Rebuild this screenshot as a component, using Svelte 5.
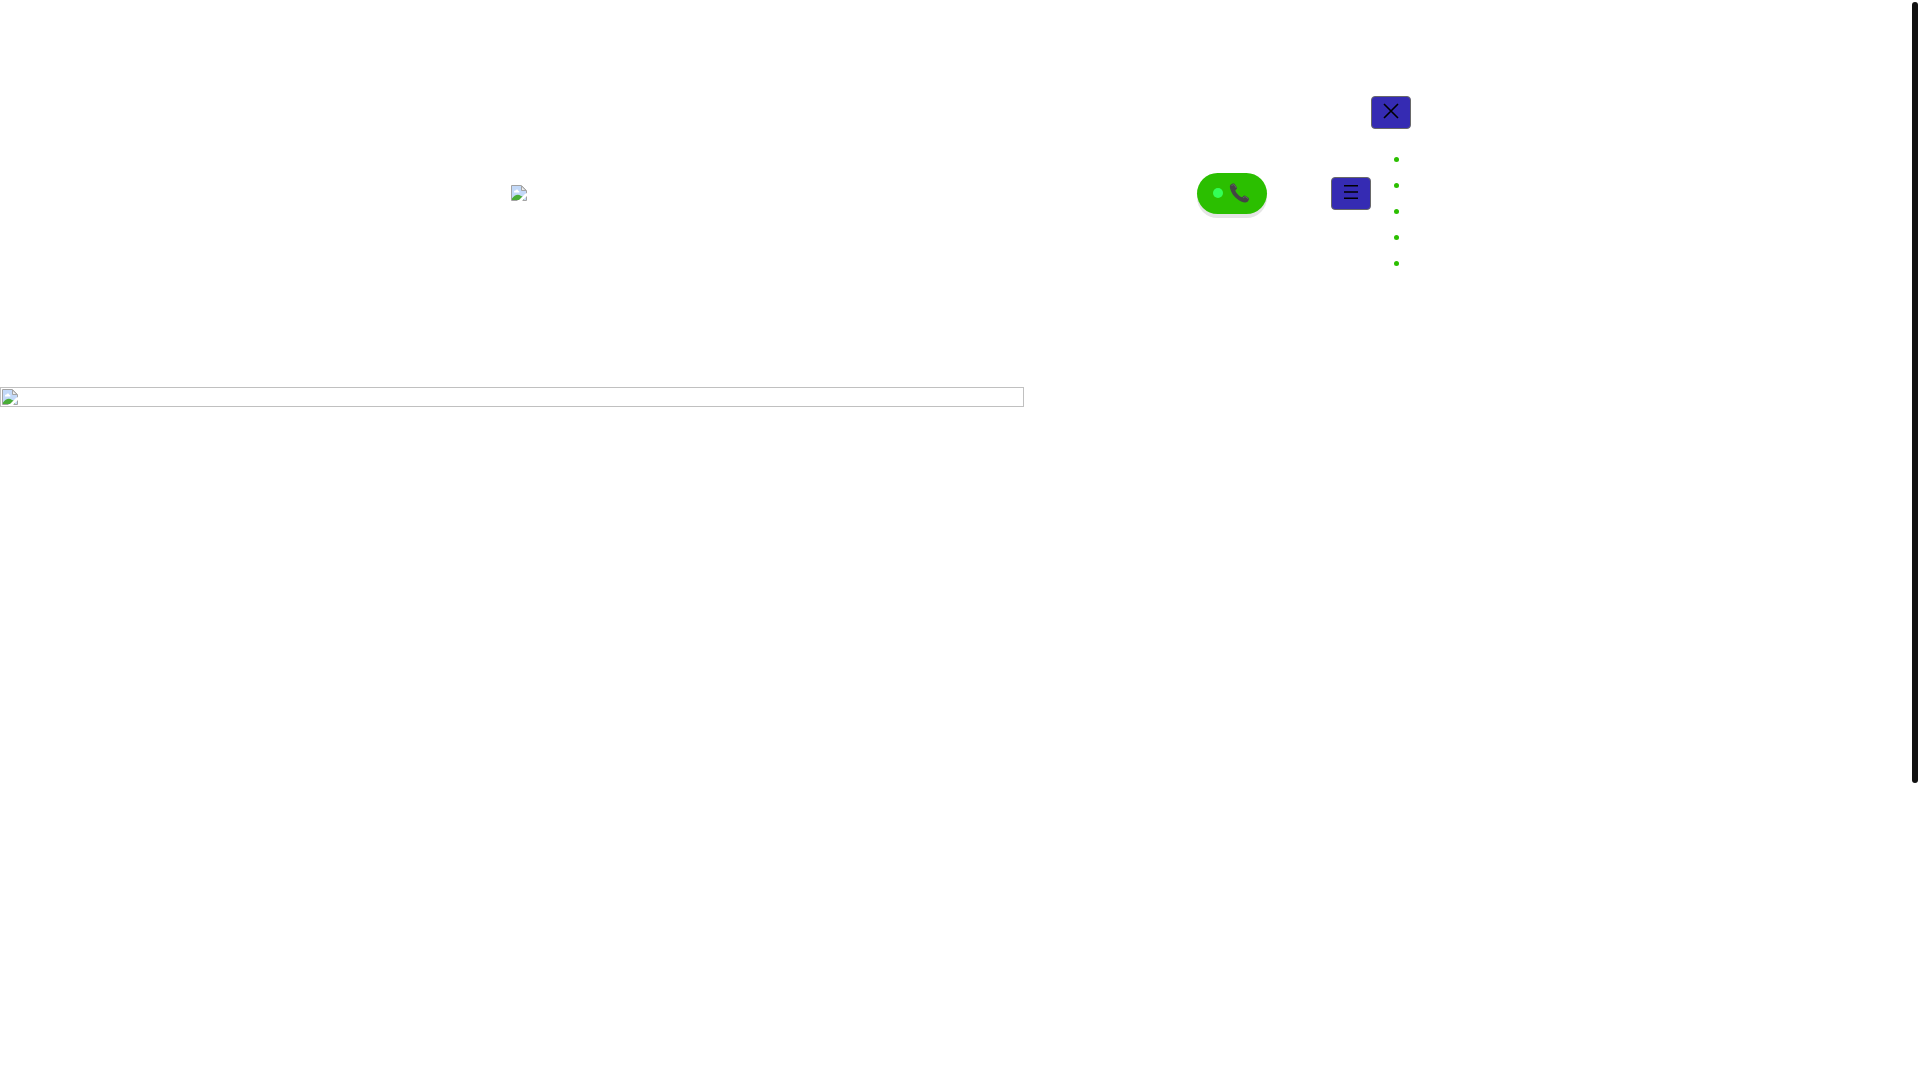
<script lang="ts">
	let menuOpen = $state(true);

	const links = ['home', 'services', 'about', 'reviews', 'contact'];
</script>

{#snippet brokenImage()}
	<svg class="broken" viewBox="0 0 16 16" aria-hidden="true">
		<path d="M1 1h10v4h4v10h-14z" fill="#c3d9f8" />
		<path d="M3 7c0-1.200.8-1.700 1.600-1.500c.5-1.500 2.400-1.200 2.600.3c1 0 1.400.8 1.200 1.700h-5.400z" fill="#fff" />
		<path d="M1 15v-1.500c2.500-3 5.500-5 9-2.500l3 1v3z" fill="#4aad37" />
		<path d="M6.500 15.500h-6v-15h10l5 5v10h-5" fill="none" stroke="#a3a3a3" />
		<path d="M10.500 1v4.500h4.500z" fill="#eee" stroke="#a3a3a3" />
		<path d="M7 16l7-7l2-1v3l-5 5z" fill="#fff" />
	</svg>
{/snippet}

<header class="site-header">
	<div class="bar">
		<a class="logo" href="#home" aria-label="Home">{@render brokenImage()}</a>
		<a class="call" href="#call" aria-label="Call">
			<span class="live"></span>
			<svg class="phone" viewBox="0 0 20 20" aria-hidden="true">
				<path d="M.8 2C2 .5 4 0 5 .8L7.600 4.800C7.800 6 6 6.500 5.800 7.800C7 10.500 9.500 13.200 12.300 14.300C13.500 14.200 14 12.400 15.300 12.600L19.200 15C20 16.200 19 18 17.800 19C15 20 12 19 9 17C4.500 14 1.500 9.500 .6 5.500C.3 4 .3 3 .8 2Z" fill="#444" />
				<path d="M2 2.500L4.500 1.500L6.800 5M13.500 15L15.500 13.500L18.800 15.800" fill="none" stroke="#626262" />
			</svg>
		</a>
		<button class="toggle" aria-label="Open menu" onclick={() => (menuOpen = true)}>
			<svg class="bars" viewBox="0 0 16 16" aria-hidden="true"><path d="M1 1.700h14M1 8h14M1 14.300h14" /></svg>
		</button>
		<nav class="menu">
			<button class="toggle" aria-label="Close menu" onclick={() => (menuOpen = false)}>
				<svg viewBox="0 0 16 16" aria-hidden="true"><path d="M1 1l14 14M15 1l-14 14" /></svg>
			</button>
			{#if menuOpen}
				<ul>
					{#each links as link}
						<li><a href="#{link}" aria-label={link}></a></li>
					{/each}
				</ul>
			{/if}
		</nav>
	</div>
</header>

<main>
	<div class="banner">{@render brokenImage()}</div>
</main>

<div class="scroll-thumb"></div>

<style>
	:global(body) {
		background: #fff;
		font: 16px/26px "Liberation Sans", Arial, sans-serif;
	}
	.site-header { padding: 96px 24px; }
	.bar {
		display: flex;
		align-items: center;
		max-width: 902px;
		margin: 0 auto;
	}
	.logo {
		display: flex;
		margin-right: auto;
		padding: 0 2px 2px;
	}
	.broken { display: block; width: 16px; height: 16px; }
	.call {
		display: flex;
		align-items: center;
		gap: 6px;
		box-sizing: border-box;
		width: 70px;
		height: 41px;
		margin-right: 64px;
		padding: 0 16px 2px;
		border-radius: 24px;
		background: #2bbf00;
		box-shadow: 0 4px 0 #e5e5e5;
	}
	.live {
		width: 10px;
		height: 10px;
		border-radius: 50%;
		background: #33ff57;
	}
	.phone { width: 21px; height: 20px; }
	.toggle {
		display: flex;
		align-items: center;
		justify-content: center;
		box-sizing: border-box;
		width: 40px;
		height: 33px;
		padding: 0 0 3px;
		border: 1px solid #696969;
		border-radius: 4px;
		background: #352bb3;
		cursor: pointer;
	}
	.toggle svg {
		width: 16px;
		height: 16px;
		fill: none;
		stroke: #000;
		stroke-width: 1.6;
	}
	.menu { width: 40px; }
	ul {
		margin: 17px 0 15px;
		padding: 0 0 0 39px;
		color: #2bbf00;
	}
	li { height: 26px; }
	.banner {
		box-sizing: border-box;
		width: 1024px;
		max-width: 100%;
		padding: 1px;
		border: 1px solid #c0c0c0;
	}
	.scroll-thumb {
		position: fixed;
		top: 2px;
		right: 2px;
		width: 6px;
		height: 781px;
		border-radius: 3px;
		background: #111;
	}
</style>
